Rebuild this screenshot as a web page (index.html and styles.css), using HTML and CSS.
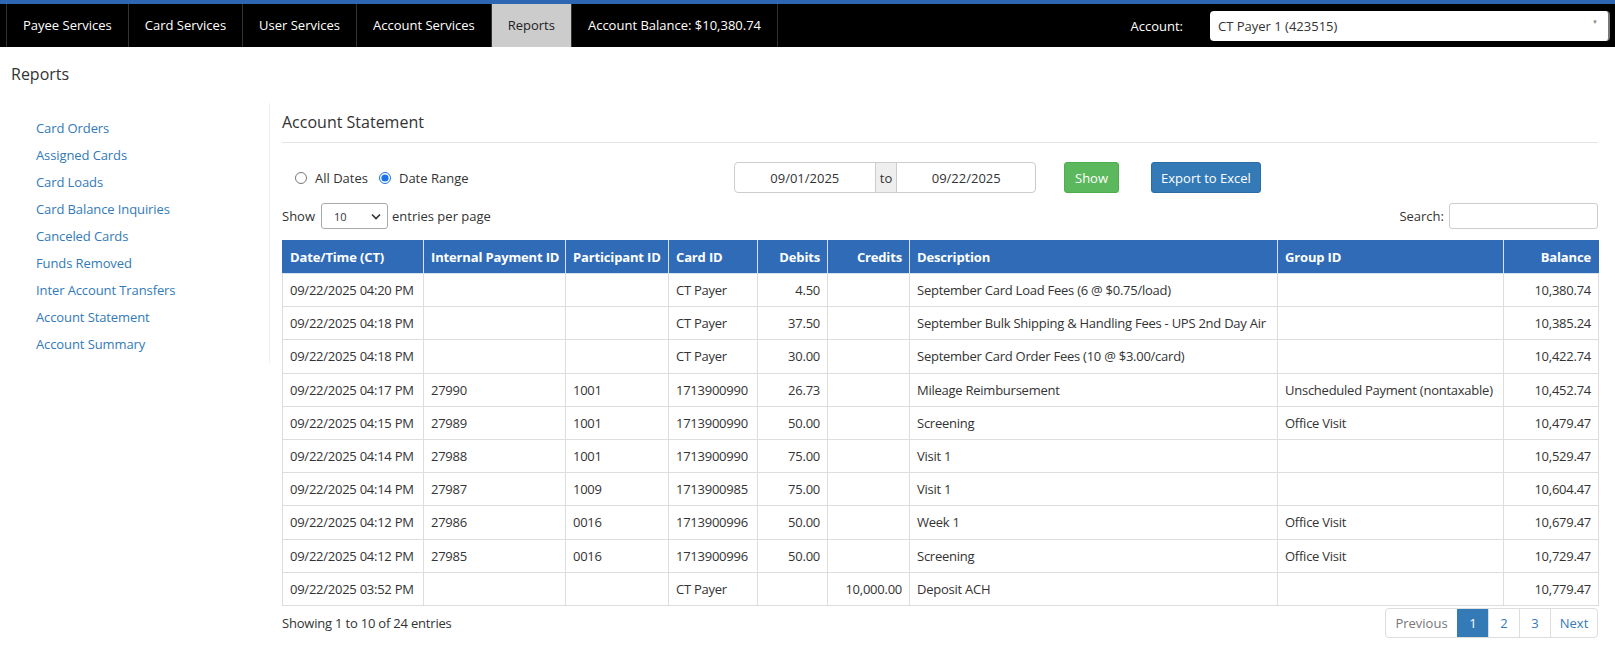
FILE: index.html
```html
<!DOCTYPE html>
<html>
<head>
<meta charset="utf-8">
<link rel="stylesheet" href="styles.css">
</head>
<body>
<nav class="topnav">
  <ul class="menu">
    <li class="item">Payee Services</li>
    <li class="item">Card Services</li>
    <li class="item">User Services</li>
    <li class="item">Account Services</li>
    <li class="item active">Reports</li>
    <li class="item">Account Balance: $10,380.74</li>
  </ul>
  <div class="acct">
    <span class="acct-label">Account:</span>
    <div class="acct-select"><span>CT Payer 1 (423515)</span><span class="caret">▼</span></div>
  </div>
</nav>
<div class="page-title">Reports</div>
<div class="layout">
  <aside class="sidebar">
    <a>Card Orders</a>
    <a>Assigned Cards</a>
    <a>Card Loads</a>
    <a>Card Balance Inquiries</a>
    <a>Canceled Cards</a>
    <a>Funds Removed</a>
    <a>Inter Account Transfers</a>
    <a>Account Statement</a>
    <a>Account Summary</a>
  </aside>
  <main class="content">
    <h2 class="title">Account Statement</h2>
    <div class="controls">
      <div class="radios">
        <label class="radio"><input type="radio" name="d"> All Dates</label>
        <label class="radio"><input type="radio" name="d" checked> Date Range</label>
      </div>
      <div class="daterange">
        <div class="dinput d1">09/01/2025</div>
        <div class="addon">to</div>
        <div class="dinput d2">09/22/2025</div>
      </div>
      <button class="btn btn-show">Show</button>
      <button class="btn btn-export">Export to Excel</button>
    </div>
    <div class="tabletools">
      <div class="length">Show <span class="lsel">10<svg width="10" height="7" viewBox="0 0 10 7"><path d="M1 1.5l4 4 4-4" fill="none" stroke="#333" stroke-width="1.6"/></svg></span> entries per page</div>
      <div class="search">Search: <span class="sinput"></span></div>
    </div>
    <table class="grid">
      <colgroup>
        <col style="width:141px"><col style="width:142px"><col style="width:103px"><col style="width:89px"><col style="width:70px"><col style="width:82px"><col style="width:368px"><col style="width:226px"><col style="width:95px">
      </colgroup>
      <thead>
        <tr><th>Date/Time (CT)</th><th>Internal Payment ID</th><th>Participant ID</th><th>Card ID</th><th class="r">Debits</th><th class="r">Credits</th><th>Description</th><th>Group ID</th><th class="r">Balance</th></tr>
      </thead>
      <tbody>
        <tr><td>09/22/2025 04:20 PM</td><td></td><td></td><td>CT Payer</td><td class="r">4.50</td><td class="r"></td><td>September Card Load Fees (6 @ $0.75/load)</td><td></td><td class="r">10,380.74</td></tr>
        <tr><td>09/22/2025 04:18 PM</td><td></td><td></td><td>CT Payer</td><td class="r">37.50</td><td class="r"></td><td>September Bulk Shipping &amp; Handling Fees - UPS 2nd Day Air</td><td></td><td class="r">10,385.24</td></tr>
        <tr><td>09/22/2025 04:18 PM</td><td></td><td></td><td>CT Payer</td><td class="r">30.00</td><td class="r"></td><td>September Card Order Fees (10 @ $3.00/card)</td><td></td><td class="r">10,422.74</td></tr>
        <tr><td>09/22/2025 04:17 PM</td><td>27990</td><td>1001</td><td>1713900990</td><td class="r">26.73</td><td class="r"></td><td>Mileage Reimbursement</td><td>Unscheduled Payment (nontaxable)</td><td class="r">10,452.74</td></tr>
        <tr><td>09/22/2025 04:15 PM</td><td>27989</td><td>1001</td><td>1713900990</td><td class="r">50.00</td><td class="r"></td><td>Screening</td><td>Office Visit</td><td class="r">10,479.47</td></tr>
        <tr><td>09/22/2025 04:14 PM</td><td>27988</td><td>1001</td><td>1713900990</td><td class="r">75.00</td><td class="r"></td><td>Visit 1</td><td></td><td class="r">10,529.47</td></tr>
        <tr><td>09/22/2025 04:14 PM</td><td>27987</td><td>1009</td><td>1713900985</td><td class="r">75.00</td><td class="r"></td><td>Visit 1</td><td></td><td class="r">10,604.47</td></tr>
        <tr><td>09/22/2025 04:12 PM</td><td>27986</td><td>0016</td><td>1713900996</td><td class="r">50.00</td><td class="r"></td><td>Week 1</td><td>Office Visit</td><td class="r">10,679.47</td></tr>
        <tr><td>09/22/2025 04:12 PM</td><td>27985</td><td>0016</td><td>1713900996</td><td class="r">50.00</td><td class="r"></td><td>Screening</td><td>Office Visit</td><td class="r">10,729.47</td></tr>
        <tr><td>09/22/2025 03:52 PM</td><td></td><td></td><td>CT Payer</td><td class="r"></td><td class="r">10,000.00</td><td>Deposit ACH</td><td></td><td class="r">10,779.47</td></tr>
      </tbody>
    </table>
    <div class="footer">
      <div class="info">Showing 1 to 10 of 24 entries</div>
      <ul class="pager">
        <li class="pg prev">Previous</li>
        <li class="pg cur">1</li>
        <li class="pg">2</li>
        <li class="pg">3</li>
        <li class="pg next">Next</li>
      </ul>
    </div>
  </main>
</div>
</body>
</html>
```
FILE: styles.css
```css
* { box-sizing: border-box; }
body {
  margin: 0;
  font-family: "Open Sans", "Noto Sans", sans-serif;
  font-size: 13px;
  color: #333;
  background: #fff;
}
.topnav {
  height: 47px;
  background: #000;
  border-top: 4px solid #2d67b4;
  display: flex;
  justify-content: space-between;
  align-items: stretch;
  padding-left: 6px;
}
.menu {
  list-style: none;
  margin: 0;
  padding: 0;
  display: flex;
  border-left: 1px solid #333;
}
.item {
  color: #fff;
  line-height: 43px;
  padding: 0 16px 0 16px;
  border-right: 1px solid #333;
  white-space: nowrap;
}
.item.active {
  background: #ccc;
  color: #222;
}
.acct {
  display: flex;
  align-items: center;
  padding-right: 5px;
}
.acct-label {
  color: #fff;
  margin-right: 27px;
}
.acct-select {
  width: 400px;
  height: 30px;
  background: #fff;
  border-radius: 4px;
  border-right: 2px solid #777;
  display: flex;
  align-items: center;
  justify-content: space-between;
  padding: 0 10px 0 8px;
  color: #333;
}
.caret {
  font-size: 6px;
  color: #888;
  margin-top: -8px;
}
.page-title {
  font-size: 16px;
  line-height: 22px;
  padding: 16px 11px 0;
}
.layout {
  display: flex;
  margin-top: 18px;
  align-items: flex-start;
}
.sidebar {
  width: 270px;
  border-right: 1px solid #eee;
  padding: 12px 0 5px 36px;
  display: flex;
  flex-direction: column;
}
.sidebar a {
  color: #337ab7;
  line-height: 27px;
  text-decoration: none;
  letter-spacing: -0.1px;
}
.content {
  width: 1330px;
  padding-left: 12px;
}
.title {
  margin: 0;
  font-size: 16px;
  font-weight: normal;
  line-height: 22px;
  padding: 8px 0 9px;
  border-bottom: 1px solid #e5e5e5;
  width: 1316px;
}
.controls {
  display: flex;
  align-items: center;
  margin-top: 19px;
  height: 31px;
}
.radios {
  width: 452px;
  display: flex;
  align-items: center;
  padding-left: 13px;
  gap: 11px;
}
.radio {
  display: flex;
  align-items: center;
}
.radio input {
  margin: 0 8px 0 0;
  width: 12px;
  height: 12px;
  accent-color: #1a73e8;
}
.daterange {
  display: flex;
  width: 302px;
  height: 31px;
  border: 1px solid #ccc;
  border-radius: 4px;
}
.dinput {
  display: flex;
  align-items: center;
  justify-content: center;
}
.d1 { width: 140px; }
.d2 { width: 138px; }
.addon {
  width: 23px;
  background: #eee;
  border-left: 1px solid #ccc;
  border-right: 1px solid #ccc;
  display: flex;
  align-items: center;
  justify-content: center;
}
.btn {
  font-family: inherit;
  font-size: 13px;
  color: #fff;
  height: 31px;
  border-radius: 3px;
  border: 1px solid transparent;
  padding: 0;
}
.btn-show {
  margin-left: 28px;
  width: 55px;
  background: #5cb85c;
  border-color: #4cae4c;
}
.btn-export {
  margin-left: 32px;
  width: 110px;
  background: #337ab7;
  border-color: #2e6da4;
}
.tabletools {
  display: flex;
  justify-content: space-between;
  align-items: center;
  margin-top: 10px;
  height: 26px;
  width: 1316px;
}
.length {
  display: flex;
  align-items: center;
}
.lsel {
  display: inline-flex;
  align-items: center;
  justify-content: space-between;
  width: 67px;
  height: 26px;
  border: 1px solid #aaa;
  border-radius: 3px;
  margin: 0 4px 0 6px;
  padding: 0 6px 0 12px;
  font-size: 11px;
}
.search {
  display: flex;
  align-items: center;
}
.sinput {
  width: 149px;
  height: 26px;
  border: 1px solid #ccc;
  border-radius: 3px;
  margin-left: 5px;
}
.grid {
  margin-top: 11px;
  border-collapse: collapse;
  table-layout: fixed;
  width: 1316px;
}
.grid th {
  background: #2f6bb7;
  color: #fff;
  font-weight: bold;
  text-align: left;
  padding: 7px 7px;
  line-height: 18px;
  border: 1px solid #d8e2ef;
  border-top-color: #2f6bb7;
  white-space: nowrap;
  letter-spacing: -0.15px;
}
.grid th:first-child { border-left-color: #2f6bb7; }
.grid th:last-child { border-right-color: #2f6bb7; }
.grid td {
  padding: 7px 7px;
  line-height: 18.2px;
  border: 1px solid #ddd;
  white-space: nowrap;
  overflow: hidden;
  letter-spacing: -0.25px;
}
.grid .r { text-align: right; }
.footer {
  display: flex;
  justify-content: space-between;
  align-items: center;
  margin-top: 2px;
  width: 1316px;
}
.info { letter-spacing: -0.2px; }
.pager {
  list-style: none;
  margin: 0;
  padding: 0;
  display: flex;
  border: 1px solid #ddd;
  border-radius: 4px;
  height: 30px;
  overflow: hidden;
}
.pg {
  color: #337ab7;
  width: 31px;
  display: flex;
  align-items: center;
  justify-content: center;
  border-left: 1px solid #ddd;
}
.pg.prev {
  width: 71px;
  color: #777;
  border-left: none;
}
.pg.next { width: 47px; }
.pg.cur {
  background: #337ab7;
  color: #fff;
  border-left-color: #337ab7;
}
```
